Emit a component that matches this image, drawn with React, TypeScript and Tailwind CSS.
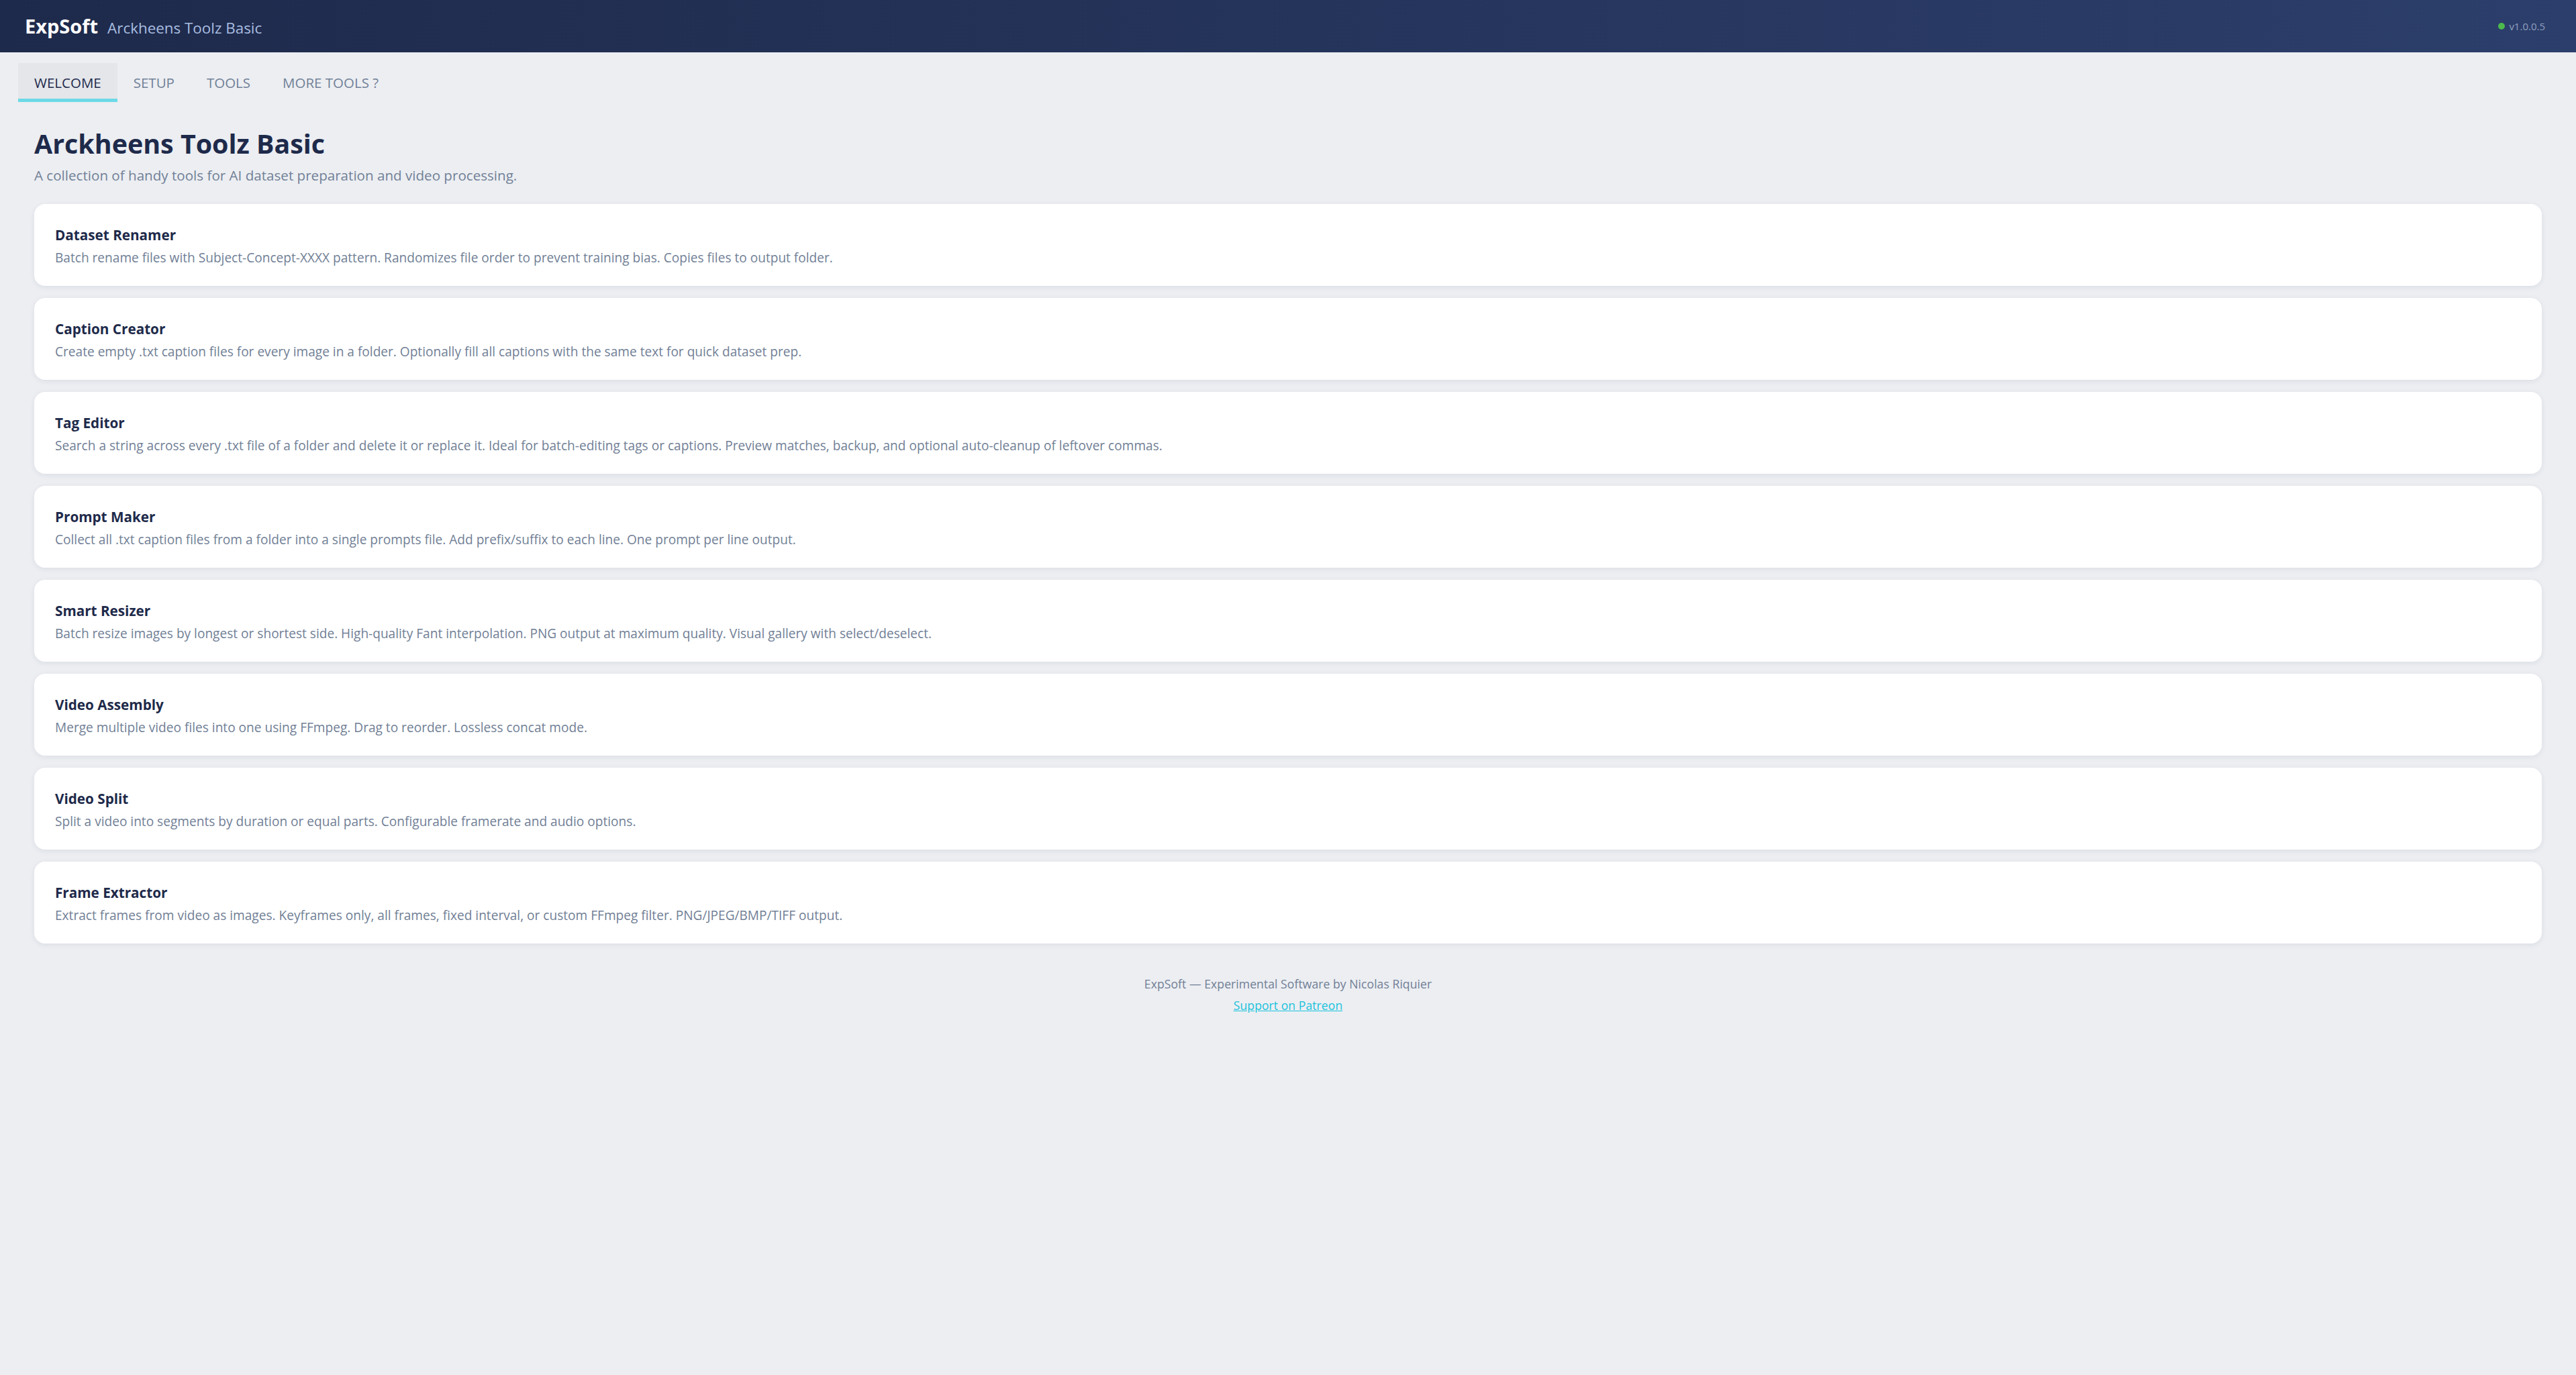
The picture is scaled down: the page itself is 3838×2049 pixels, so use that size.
import { useState } from 'react';

const tools = [
  {
    name: 'Dataset Renamer',
    description:
      'Batch rename files with Subject-Concept-XXXX pattern. Randomizes file order to prevent training bias. Copies files to output folder.',
  },
  {
    name: 'Caption Creator',
    description:
      'Create empty .txt caption files for every image in a folder. Optionally fill all captions with the same text for quick dataset prep.',
  },
  {
    name: 'Tag Editor',
    description:
      'Search a string across every .txt file of a folder and delete it or replace it. Ideal for batch-editing tags or captions. Preview matches, backup, and optional auto-cleanup of leftover commas.',
  },
  {
    name: 'Prompt Maker',
    description:
      'Collect all .txt caption files from a folder into a single prompts file. Add prefix/suffix to each line. One prompt per line output.',
  },
  {
    name: 'Smart Resizer',
    description:
      'Batch resize images by longest or shortest side. High-quality Fant interpolation. PNG output at maximum quality. Visual gallery with select/deselect.',
  },
  {
    name: 'Video Assembly',
    description:
      'Merge multiple video files into one using FFmpeg. Drag to reorder. Lossless concat mode.',
  },
  {
    name: 'Video Split',
    description:
      'Split a video into segments by duration or equal parts. Configurable framerate and audio options.',
  },
  {
    name: 'Frame Extractor',
    description:
      'Extract frames from video as images. Keyframes only, all frames, fixed interval, or custom FFmpeg filter. PNG/JPEG/BMP/TIFF output.',
  },
];

const tabs = ['WELCOME', 'SETUP', 'TOOLS', 'MORE TOOLS ?'];

const ToolCard = ({ name, description }: { name: string; description: string }) => (
  <div className="bg-white rounded-[16px] shadow-[0_2px_8px_rgba(30,42,74,0.08)] px-[31px] pt-[4px] h-[122px] flex flex-col justify-center">
    <h3 className="text-[20.7px] font-bold text-[#1e2a4a] leading-[30px]">{name}</h3>
    <p className="text-[19.1px] text-[#718096] leading-[30px] mt-[4px]">{description}</p>
  </div>
);

export default function App() {
  const [activeTab, setActiveTab] = useState('WELCOME');

  return (
    <div className="min-h-screen bg-[#eceef2] font-['Open_Sans','Segoe_UI',sans-serif]">
      <header className="h-[78px] bg-gradient-to-r from-[#1e2a4b] to-[#2c3e6b] flex items-center justify-between pl-[37px] pr-[46px]">
        <div className="flex items-baseline gap-[14px]">
          <span className="text-[29px] font-bold text-white">ExpSoft</span>
          <span className="text-[22.4px] text-[#a9bde0]">Arckheens Toolz Basic</span>
        </div>
        <div className="flex items-center gap-[6px]">
          <span className="w-[10px] h-[10px] rounded-full bg-[#4cbb4c]" />
          <span className="text-[15px] text-[#8fa0c0]">v1.0.0.5</span>
        </div>
      </header>

      <nav className="flex px-[27px] pt-[16px]">
        {tabs.map((tab) => (
          <button
            key={tab}
            onClick={() => setActiveTab(tab)}
            className={
              tab === activeTab
                ? 'h-[58px] px-[24px] text-[20.5px] text-[#1e2a4a] bg-[#e4e6ea] border-b-[5px] border-[#6dd9e6] pt-[6px]'
                : 'h-[58px] px-[24px] text-[20.5px] text-[#718096] border-b-[5px] border-transparent pt-[6px]'
            }
          >
            {tab}
          </button>
        ))}
      </nav>

      <main className="px-[51px] pt-[36px]">
        <h1 className="text-[39.4px] font-bold text-[#1e2a4a] leading-[52px]">Arckheens Toolz Basic</h1>
        <p className="text-[20.6px] text-[#718096] leading-[28px] mt-[7px]">
          A collection of handy tools for AI dataset preparation and video processing.
        </p>

        <div className="flex flex-col gap-[18px] mt-[29px]">
          {tools.map((tool) => (
            <ToolCard key={tool.name} name={tool.name} description={tool.description} />
          ))}
        </div>

        <footer className="flex flex-col items-center pt-[44px] pb-[40px] text-[17.7px] leading-[32px]">
          <p className="text-[#718096]">ExpSoft — Experimental Software by Nicolas Riquier</p>
          <a href="#" className="text-[#1cc3dc] underline">
            Support on Patreon
          </a>
        </footer>
      </main>
    </div>
  );
}
